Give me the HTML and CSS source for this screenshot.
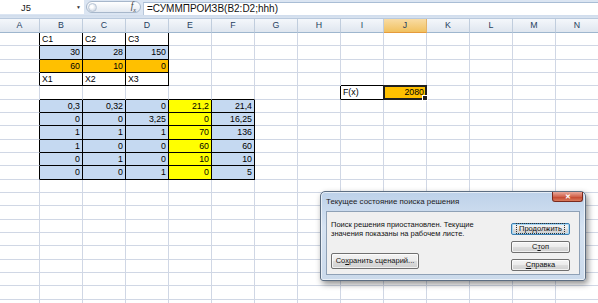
FILE: index.html
```html
<!DOCTYPE html>
<html lang="ru">
<head>
    <meta charset="UTF-8">
    <title>Поиск решения</title>
    <link rel="stylesheet" href="styles.css">
</head>
<body>
    <div class="formula-bar">
        <div class="name-box">
            <span class="name">J5</span>
            <span class="drop">&#9660;</span>
        </div>
        <div class="fx-pill">
            <span class="knob"></span>
            <span class="fx">f<sub>x</sub></span>
        </div>
        <div class="formula">=СУММПРОИЗВ(B2:D2;hhh)</div>
    </div>
    <div class="band"></div>
    <div class="sheet" id="sheet"></div>

    <div class="dialog">
        <div class="title-bar">
            <span class="title">Текущее состояние поиска решения</span>
            <span class="close">&#10005;</span>
        </div>
        <div class="dialog-body">
            <div class="dialog-main">
                <p class="message">Поиск решения приостановлен. Текущие<br>значения показаны на рабочем листе.</p>
                <button class="btn save">Со<u>х</u>ранить сценарий...</button>
            </div>
            <div class="dialog-buttons">
                <button class="btn default"><span class="focus">Продолжить</span></button>
                <button class="btn">С<u>т</u>оп</button>
                <button class="btn"><u>С</u>правка</button>
            </div>
        </div>
    </div>

    <script>
        const cols = 'ABCDEFGHIJKLMN'.split('');
        const rowCount = 21;

        const values = {
            B1: 'C1', C1: 'C2', D1: 'C3',
            B2: '30', C2: '28', D2: '150',
            B3: '60', C3: '10', D3: '0',
            B4: 'X1', C4: 'X2', D4: 'X3',
            I5: 'F(x)', J5: '2080'
        };

        const table = [
            ['0,3', '0,32', '0', '21,2', '21,4'],
            ['0', '0', '3,25', '0', '16,25'],
            ['1', '1', '1', '70', '136'],
            ['1', '0', '0', '60', '60'],
            ['0', '1', '0', '10', '10'],
            ['0', '0', '1', '0', '5']
        ];
        table.forEach((row, i) => {
            row.forEach((v, j) => { values[cols[1 + j] + (6 + i)] = v; });
        });

        const fills = {
            blue: ['B2:D2', 'B6:D11', 'F6:F11'],
            orange: ['B3:D3', 'J5'],
            yellow: ['E6:E11']
        };
        const boxed = ['B1:D4', 'B6:F11', 'I5:J5'];

        function parseRef(ref) {
            return { c: cols.indexOf(ref[0]), r: parseInt(ref.slice(1)) };
        }

        function inAny(c, r, ranges) {
            return ranges.some(range => {
                const [a, b] = range.split(':');
                const s = parseRef(a);
                const e = parseRef(b || a);
                return c >= s.c && c <= e.c && r >= s.r && r <= e.r;
            });
        }

        function buildSheet() {
            const sheet = document.getElementById('sheet');
            cols.forEach(col => {
                const head = document.createElement('div');
                head.className = 'col-head' + (col === 'J' ? ' selected' : '');
                head.textContent = col;
                sheet.appendChild(head);
            });
            for (let r = 1; r <= rowCount; r++) {
                cols.forEach((col, c) => {
                    const ref = col + r;
                    const cell = document.createElement('div');
                    let cls = 'cell';
                    for (const name in fills) {
                        if (inAny(c, r, fills[name])) cls += ' ' + name;
                    }
                    if (inAny(c, r, boxed) || inAny(c + 1, r, boxed)) cls += ' edge-r';
                    if (inAny(c, r, boxed) || inAny(c, r + 1, boxed)) cls += ' edge-b';
                    const v = values[ref];
                    if (v !== undefined) {
                        cell.textContent = v;
                        if (/^[\d,]+$/.test(v)) cls += ' num';
                    }
                    if (ref === 'J5') {
                        cls += ' active';
                        const sel = document.createElement('span');
                        sel.className = 'sel';
                        cell.appendChild(sel);
                    }
                    cell.className = cls;
                    sheet.appendChild(cell);
                });
            }
        }

        buildSheet();
    </script>
</body>
</html>
```

FILE: styles.css
```css
* {
    box-sizing: border-box;
}
body {
    margin: 0;
    width: 598px;
    height: 303px;
    overflow: hidden;
    position: relative;
    background: #fff;
    font-family: "Liberation Sans", Arial, sans-serif;
}

/* formula bar */
.formula-bar {
    display: flex;
    height: 15px;
    background: #dbe5f2;
}
.name-box {
    width: 84px;
    height: 14px;
    background: #fff;
    display: flex;
    align-items: center;
    padding-left: 21px;
    font-size: 9.4px;
    color: #1a1a1a;
}
.name-box .name {
    flex: 1;
}
.name-box .drop {
    font-size: 5px;
    color: #333;
    margin-right: 3px;
}
.fx-pill {
    width: 55px;
    height: 12px;
    margin: 1px 2px 0 2px;
    border: 1px solid #a7b7cb;
    border-radius: 6px;
    background: linear-gradient(#ffffff, #e3e9f1);
    display: flex;
    align-items: center;
    justify-content: space-between;
    padding: 0 4px 0 1px;
}
.fx-pill .knob {
    width: 9px;
    height: 9px;
    border-radius: 50%;
    background: radial-gradient(circle at 40% 40%, #ffffff 20%, #cdd6e2 80%);
    border: 1px solid #b9c6d6;
}
.fx-pill .fx {
    font-family: "Liberation Serif", serif;
    font-style: italic;
    font-size: 9.5px;
    color: #444;
    line-height: 1;
}
.fx-pill .fx sub {
    font-size: 6px;
}
.formula {
    flex: 1;
    margin-top: 2px;
    height: 13px;
    background: #fff;
    border-left: 1px solid #b8c8db;
    border-top: 1px solid #a9bdd5;
    padding-left: 3px;
    font-size: 10px;
    line-height: 11px;
    color: #111;
}
.band {
    height: 4px;
    background: linear-gradient(#cfdcec, #d9e3f0);
    border-bottom: 1px solid #b9c9dd;
}

/* sheet */
.sheet {
    display: grid;
    grid-template-columns: 40px repeat(13, 43px);
    grid-template-rows: 14px;
    grid-auto-rows: 13.333px;
    font-size: 8.8px;
}
.col-head {
    background: linear-gradient(#f4f7fb, #dfe6ef);
    border-right: 1px solid #c0cddd;
    border-bottom: 1px solid #9eb6ce;
    color: #27415f;
    text-align: center;
    line-height: 13px;
}
.col-head.selected {
    background: linear-gradient(#f9dca4, #f1c15f);
    border-bottom-color: #e59a3c;
    border-right-color: #e3b36a;
}
.cell {
    border-right: 1px solid #d0d7e5;
    border-bottom: 1px solid #d0d7e5;
    padding: 0 2px;
    line-height: 13px;
    white-space: nowrap;
    color: #000;
}
.cell.num {
    text-align: right;
}
.cell.edge-r {
    border-right-color: #000;
}
.cell.edge-b {
    border-bottom-color: #000;
}
.cell.blue {
    background: #c5d9f1;
}
.cell.orange {
    background: #ffc000;
}
.cell.yellow {
    background: #ffff00;
}
.cell.active {
    position: relative;
}
.sel {
    position: absolute;
    left: -1px;
    top: -1px;
    right: -1px;
    bottom: -1px;
    border: 2px solid #1f1f1f;
}
.sel::after {
    content: '';
    position: absolute;
    right: -3px;
    bottom: -3px;
    width: 4px;
    height: 4px;
    background: #1f1f1f;
    border: 1px solid #fff;
}

/* solver dialog */
.dialog {
    position: absolute;
    left: 320px;
    top: 191px;
    width: 266px;
    height: 90px;
    padding: 19px 5px 5px 5px;
    border: 1px solid #5d6e82;
    border-radius: 5px 5px 3px 3px;
    background: linear-gradient(#bdd1e9, #d6e3f2 40%, #cbdaeb);
    box-shadow: 2px 3px 6px rgba(0, 0, 0, 0.45), inset 0 0 0 1px rgba(255, 255, 255, 0.6);
    font-size: 7.5px;
    color: #111;
}
.title-bar {
    position: absolute;
    left: 0;
    top: 0;
    right: 0;
    height: 19px;
}
.title {
    position: absolute;
    left: 5px;
    top: 5px;
    font-size: 7.9px;
    color: #1c1c1c;
}
.close {
    position: absolute;
    right: 2px;
    top: 0;
    width: 31px;
    height: 10px;
    border: 1px solid #7a2a1e;
    border-top: none;
    border-radius: 0 0 3px 3px;
    background: linear-gradient(#e9a99c, #d2664f 50%, #c2432c 51%, #d97a5c);
    color: #fff;
    font-size: 7px;
    font-weight: bold;
    text-align: center;
    line-height: 9px;
}
.dialog-body {
    height: 100%;
    display: flex;
    background: #f0f0f0;
    border: 1px solid #8fa1b6;
}
.dialog-main {
    flex: 1;
    display: flex;
    flex-direction: column;
    padding: 8px 0 5px 4px;
}
.message {
    margin: 0;
    line-height: 9px;
}
.dialog-buttons {
    display: flex;
    flex-direction: column;
    gap: 6px;
    width: 59px;
    margin-right: 9px;
    padding-top: 11px;
}
.btn {
    font-family: inherit;
    font-size: 7.5px;
    color: #111;
    height: 12px;
    padding: 0;
    border: 1px solid #707070;
    border-radius: 2px;
    background: linear-gradient(#f4f4f4, #ebebeb 50%, #dddddd 51%, #cfcfcf);
    box-shadow: inset 0 0 0 1px rgba(255, 255, 255, 0.7);
    line-height: 10px;
}
.btn.default {
    border-color: #3c7fb1;
    box-shadow: inset 0 0 0 1px #a9d9f5;
}
.btn .focus {
    outline: 1px dotted #333;
    outline-offset: 0;
    padding: 0 2px;
}
.btn.save {
    margin-top: auto;
    width: 88px;
    height: 16px;
}
```
